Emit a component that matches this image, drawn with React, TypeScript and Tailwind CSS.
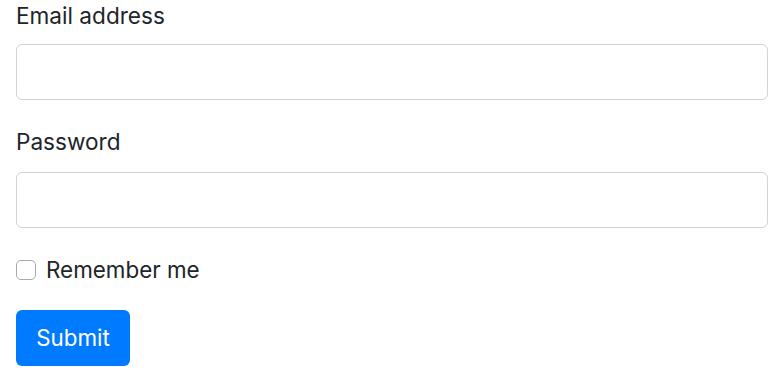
import React, { FC } from "react";

const labelCls = "block text-[22.6px] leading-[30px] text-[#212529]";
const inputCls =
  "block w-full h-[56px] rounded-[6px] border border-[#ced4da] bg-white px-4 text-[22px] outline-none";

const App: FC = () => {
  return (
    <div
      className="w-[781px] h-[378px] bg-white pl-[16px] pr-[13px] pt-[1px]"
      style={{ fontFamily: "Inter, 'Liberation Sans', sans-serif" }}
    >
      <form onSubmit={(e) => e.preventDefault()}>
        <label className={labelCls}>Email address</label>
        <input type="email" className={`${inputCls} mt-[13px]`} />

        <label className={`${labelCls} mt-[27px]`}>Password</label>
        <input type="password" className={`${inputCls} mt-[15px]`} />

        {/* checkbox row */}
        <label className="mt-[32px] flex items-center gap-[10px] h-[20px] text-[22.4px] text-[#212529]">
          <span className="w-[20px] h-[20px] rounded-[5px] border border-[#a8a8a8] bg-white shrink-0" />
          <span className="leading-[20px]">Remember me</span>
        </label>

        <button
          type="submit"
          className="mt-[30px] w-[114px] h-[56px] rounded-[6px] bg-[#007bff] text-white text-[22.4px]"
        >
          Submit
        </button>
      </form>
    </div>
  );
};

export default App;
